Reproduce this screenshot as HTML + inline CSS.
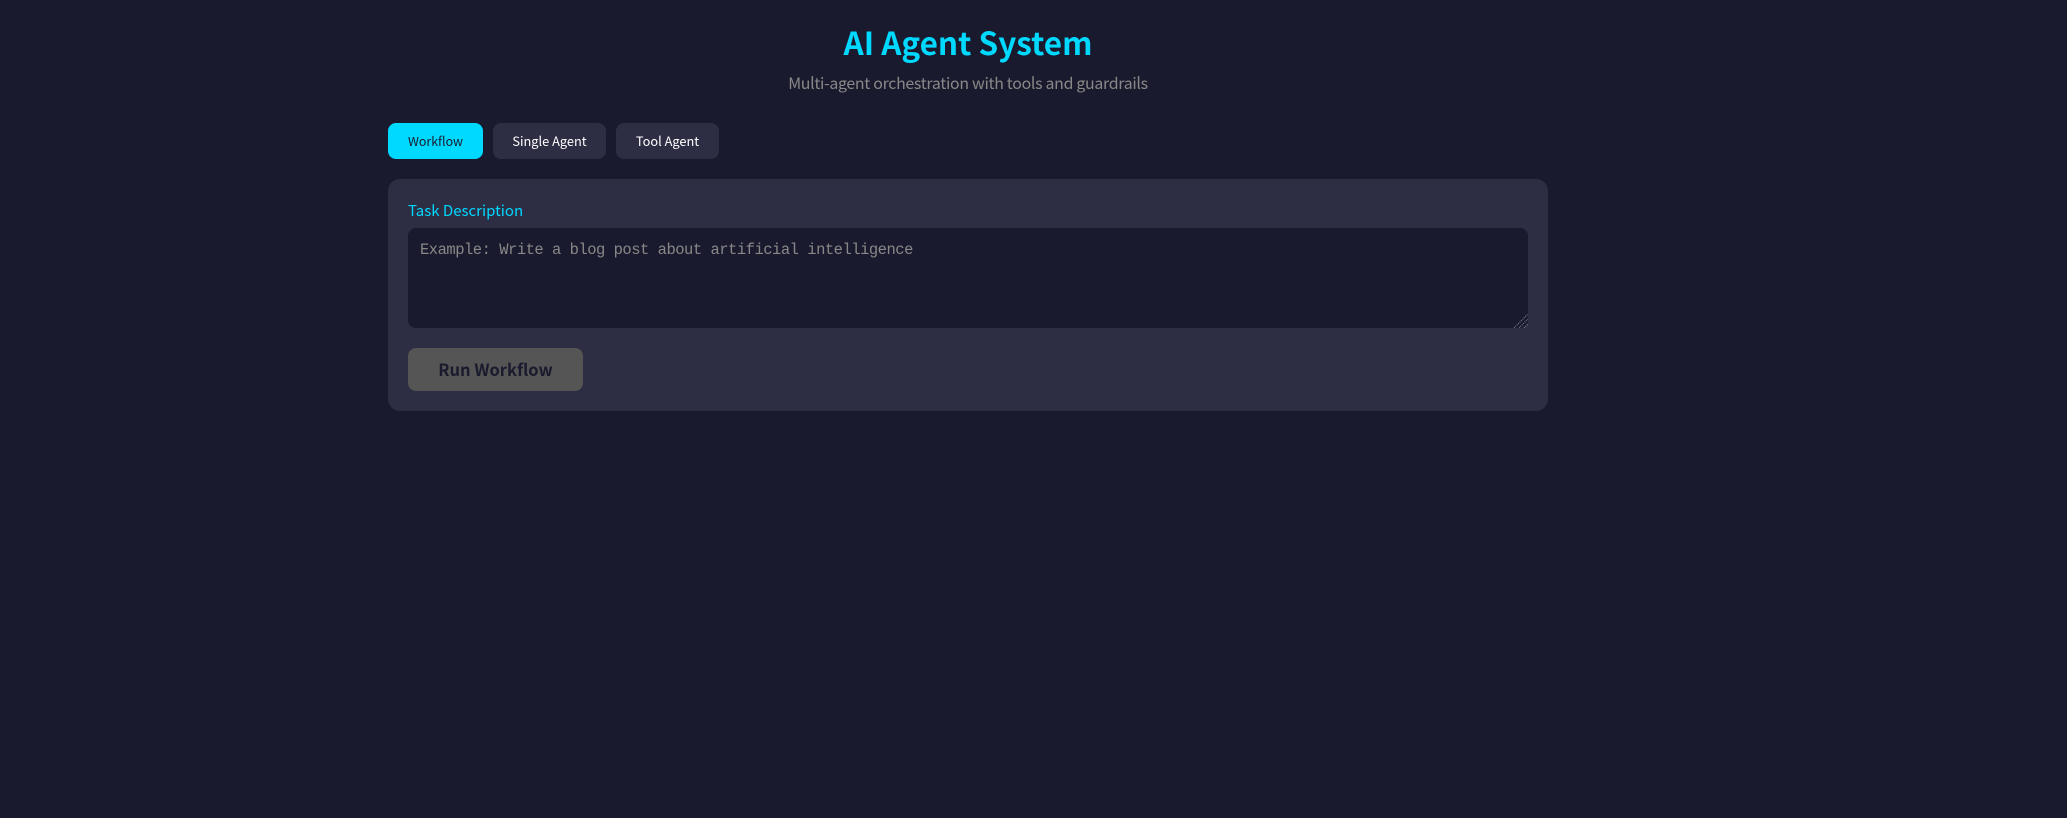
<!DOCTYPE html>
<html lang="en">
<head>
<meta charset="utf-8">
<title>AI Agent System</title>
<style>
html,body{margin:0;padding:0;width:2067px;height:818px;overflow:hidden;background:#1a1a2e}
body{position:relative;font-family:"Noto Sans CJK JP","Liberation Sans",sans-serif}
.a{position:absolute;white-space:nowrap}
.t{line-height:24px;height:24px}
.box{position:absolute}
</style>
</head>
<body>
<div class="a t" style="left:0;width:1936px;text-align:center;top:30px;font-size:31.5px;line-height:24px;font-weight:700;color:#00d9ff">AI Agent System</div>
<div class="a t" style="left:0;width:1936px;text-align:center;top:71px;font-size:15.9px;letter-spacing:-.3px;color:#888888">Multi-agent orchestration with tools and guardrails</div>

<div class="box" style="left:388px;top:123px;width:95px;height:36px;background:#00d9ff;border-radius:8px"></div>
<div class="a t" style="left:388px;width:95px;text-align:center;top:129px;font-size:12.4px;color:#1a1a2e">Workflow</div>
<div class="box" style="left:493px;top:123px;width:113px;height:36px;background:#2d2d44;border-radius:8px"></div>
<div class="a t" style="left:493px;width:113px;text-align:center;top:129px;font-size:12.8px;color:#ffffff">Single Agent</div>
<div class="box" style="left:616px;top:123px;width:103px;height:36px;background:#2d2d44;border-radius:8px"></div>
<div class="a t" style="left:616px;width:103px;text-align:center;top:129px;font-size:12.8px;color:#ffffff">Tool Agent</div>

<div class="box" style="left:388px;top:179px;width:1160px;height:232px;background:#2d2d44;border-radius:12px"></div>
<div class="a t" style="left:408px;top:199px;font-size:15px;color:#00d9ff">Task Description</div>
<div class="box" style="left:408px;top:228px;width:1120px;height:100px;background:#1a1a2e;border-radius:8px"></div>
<div class="a t" style="left:420px;top:238px;font-family:'Liberation Mono',monospace;font-size:15.5px;letter-spacing:-.5px;color:#888888">Example: Write a blog post about artificial intelligence</div>
<svg class="box" style="left:1513px;top:313px" width="15" height="15" viewBox="0 0 15 15">
<path d="M1 15L15 1M6 15L15 6M11 15L15 11" stroke="#7f8c9c" stroke-width="1" stroke-dasharray="1 1" fill="none"/>
</svg>

<div class="box" style="left:408px;top:348px;width:175px;height:43px;background:#555555;border-radius:8px"></div>
<div class="a t" style="left:408px;width:175px;text-align:center;top:357px;font-size:16.5px;font-weight:700;color:#1a1a2e">Run Workflow</div>
</body>
</html>
